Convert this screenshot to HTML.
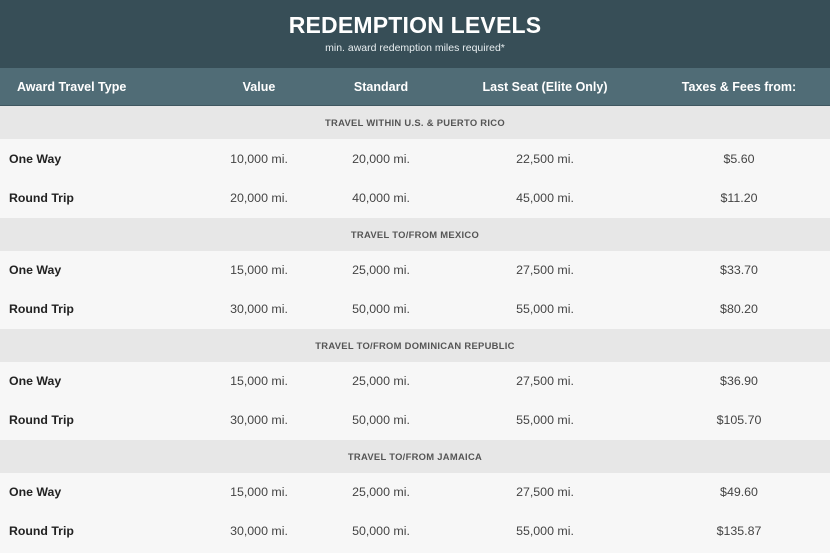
<!DOCTYPE html>
<html><head><meta charset="utf-8"><style>
*{margin:0;padding:0;box-sizing:border-box}
body{width:830px;height:553px;overflow:hidden;background:#f7f7f7;font-family:"Liberation Sans",sans-serif;position:relative}
.top{position:absolute;left:0;top:0;width:830px;height:68px;background:#374e57;color:#fff;text-align:center}
.top h1{font-size:23px;font-weight:bold;letter-spacing:0.2px;position:absolute;top:12px;width:100%}
.top p{font-size:10.5px;position:absolute;top:42px;width:100%;color:#e8eef0}
.hd{position:absolute;left:0;top:68px;width:830px;height:38px;background:#506c76;color:#fff;font-weight:bold;font-size:12.5px;border-bottom:1px solid #3f5760}
.r{position:absolute;left:0;width:830px}
.r span{position:absolute;text-align:center;line-height:inherit}
.sec{background:#e7e7e7;height:33px;line-height:33px;font-size:9.4px;font-weight:bold;color:#555;text-align:center;letter-spacing:0.3px}
.row{background:#f7f7f7;height:39px;line-height:39px;font-size:12.4px;color:#444}
.row b{position:absolute;left:9px;color:#222;font-size:12.3px}
.c1{left:199px;width:120px}.c2{left:321px;width:120px}.c3{left:465px;width:160px}.c4{left:679px;width:120px}
.hd span{position:absolute;top:0;line-height:38px;text-align:center}
</style></head><body>
<div class="top"><h1>REDEMPTION LEVELS</h1><p>min. award redemption miles required*</p></div>
<div class="hd"><span style="left:17px">Award Travel Type</span><span class="c1">Value</span><span class="c2">Standard</span><span class="c3">Last Seat (Elite Only)</span><span class="c4">Taxes &amp; Fees from:</span></div>

<div class="r sec" style="top:106px">TRAVEL WITHIN U.S. &amp; PUERTO RICO</div>
<div class="r row" style="top:140px"><b>One Way</b><span class="c1">10,000 mi.</span><span class="c2">20,000 mi.</span><span class="c3">22,500 mi.</span><span class="c4">$5.60</span></div>
<div class="r row" style="top:179px"><b>Round Trip</b><span class="c1">20,000 mi.</span><span class="c2">40,000 mi.</span><span class="c3">45,000 mi.</span><span class="c4">$11.20</span></div>

<div class="r sec" style="top:218px">TRAVEL TO/FROM MEXICO</div>
<div class="r row" style="top:251px"><b>One Way</b><span class="c1">15,000 mi.</span><span class="c2">25,000 mi.</span><span class="c3">27,500 mi.</span><span class="c4">$33.70</span></div>
<div class="r row" style="top:290px"><b>Round Trip</b><span class="c1">30,000 mi.</span><span class="c2">50,000 mi.</span><span class="c3">55,000 mi.</span><span class="c4">$80.20</span></div>

<div class="r sec" style="top:329px">TRAVEL TO/FROM DOMINICAN REPUBLIC</div>
<div class="r row" style="top:362px"><b>One Way</b><span class="c1">15,000 mi.</span><span class="c2">25,000 mi.</span><span class="c3">27,500 mi.</span><span class="c4">$36.90</span></div>
<div class="r row" style="top:401px"><b>Round Trip</b><span class="c1">30,000 mi.</span><span class="c2">50,000 mi.</span><span class="c3">55,000 mi.</span><span class="c4">$105.70</span></div>

<div class="r sec" style="top:440px">TRAVEL TO/FROM JAMAICA</div>
<div class="r row" style="top:473px"><b>One Way</b><span class="c1">15,000 mi.</span><span class="c2">25,000 mi.</span><span class="c3">27,500 mi.</span><span class="c4">$49.60</span></div>
<div class="r row" style="top:512px"><b>Round Trip</b><span class="c1">30,000 mi.</span><span class="c2">50,000 mi.</span><span class="c3">55,000 mi.</span><span class="c4">$135.87</span></div>
</body></html>
